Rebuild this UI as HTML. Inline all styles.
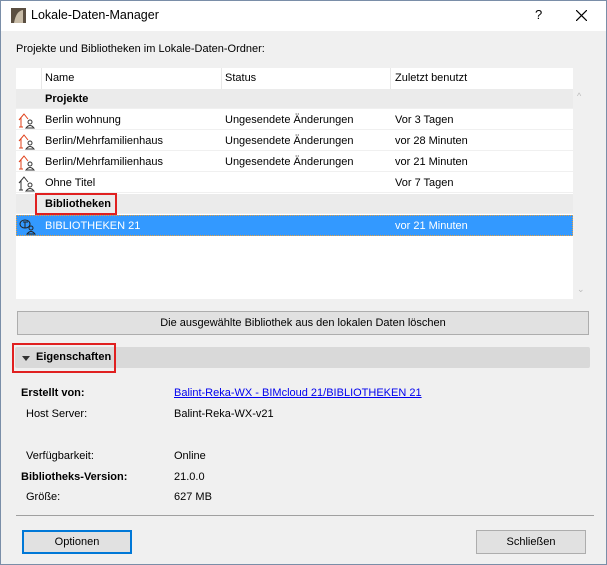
<!DOCTYPE html>
<html><head><meta charset="utf-8"><style>
*{margin:0;padding:0;box-sizing:border-box}
body{width:607px;height:565px;overflow:hidden;font-family:"Liberation Sans",sans-serif;font-size:11px;color:#000;background:#f0f0f0;position:relative}
.win{position:absolute;left:0;top:0;width:607px;height:565px;background:#f0f0f0}
.frame{position:absolute;left:0;top:0;width:607px;height:565px;border:1px solid #7a8ea8;pointer-events:none}
.title{position:absolute;left:0;top:0;width:607px;height:31px;background:#fff}
.abs{position:absolute;white-space:nowrap}
.list{position:absolute;left:16px;top:68px;width:557px;height:231px;background:#fff}
.row{position:absolute;left:0;width:557px;height:20px;line-height:20px;border-bottom:1px solid #f0f0f0}
.grp{background:#ebebeb;font-weight:bold}
.sel{background:#3399ff;color:#fff;border:1px dotted #e8a040}
.c1{position:absolute;left:29px}.c2{position:absolute;left:209px}.c3{position:absolute;left:379px}
.ic{position:absolute;left:2px;top:2px}
.btn{position:absolute;background:#e1e1e1;border:1px solid #adadad;text-align:center}
</style></head><body><div class="win">
<div class="title">
<svg class="abs" style="left:11px;top:8px" width="15" height="15"><rect width="15" height="15" fill="#5a4e40"/><path d="M3 15 Q5 3 12 2 L12 15" fill="#c8bca8"/></svg>
<div class="abs" style="left:31px;top:8px;font-size:12.5px">Lokale-Daten-Manager</div>
<div class="abs" style="left:535px;top:7px;font-size:13px">?</div>
<svg class="abs" style="left:576px;top:10px" width="11" height="11"><path d="M0 0L11 11M11 0L0 11" stroke="#000" stroke-width="1.2"/></svg>
</div>
<div class="abs" style="left:16px;top:43px">Projekte und Bibliotheken im Lokale-Daten-Ordner:</div>
<div class="list">
<div class="row" style="top:0;height:21px;border:none"><span style="position:absolute;left:25px;top:0;width:1px;height:21px;background:#e8e8e8"></span><span class="c1">Name</span><span style="position:absolute;left:205px;width:1px;height:21px;background:#e8e8e8"></span><span class="c2">Status</span><span style="position:absolute;left:374px;width:1px;height:21px;background:#e8e8e8"></span><span class="c3">Zuletzt benutzt</span></div>
<div class="row grp" style="top:21px"><span class="c1">Projekte</span></div>
<div class="row" style="top:42px"><svg class="ic" width="17" height="17"><path d="M1 8L6 2L10 7M3 6V15M1 15H5" stroke="#e0401a" fill="none"/><circle cx="12" cy="10" r="2" fill="none" stroke="#333"/><path d="M8 16Q12 11 16 16Z" fill="none" stroke="#333"/></svg><span class="c1">Berlin wohnung</span><span class="c2">Ungesendete Änderungen</span><span class="c3">Vor 3 Tagen</span></div>
<div class="row" style="top:63px"><svg class="ic" width="17" height="17"><path d="M1 8L6 2L10 7M3 6V15M1 15H5" stroke="#e0401a" fill="none"/><circle cx="12" cy="10" r="2" fill="none" stroke="#333"/><path d="M8 16Q12 11 16 16Z" fill="none" stroke="#333"/></svg><span class="c1">Berlin/Mehrfamilienhaus</span><span class="c2">Ungesendete Änderungen</span><span class="c3">vor 28 Minuten</span></div>
<div class="row" style="top:84px"><svg class="ic" width="17" height="17"><path d="M1 8L6 2L10 7M3 6V15M1 15H5" stroke="#e0401a" fill="none"/><circle cx="12" cy="10" r="2" fill="none" stroke="#333"/><path d="M8 16Q12 11 16 16Z" fill="none" stroke="#333"/></svg><span class="c1">Berlin/Mehrfamilienhaus</span><span class="c2">Ungesendete Änderungen</span><span class="c3">vor 21 Minuten</span></div>
<div class="row" style="top:105px"><svg class="ic" width="17" height="17"><path d="M1 8L6 2L10 7M3 6V15M1 15H5" stroke="#333" fill="none"/><circle cx="12" cy="10" r="2" fill="none" stroke="#333"/><path d="M8 16Q12 11 16 16Z" fill="none" stroke="#333"/></svg><span class="c1">Ohne Titel</span><span class="c3">Vor 7 Tagen</span></div>
<div class="row grp" style="top:126px"><span class="c1">Bibliotheken</span></div>
<div class="row sel" style="top:147px;height:21px"><svg class="ic" width="17" height="17"><ellipse cx="6" cy="6" rx="5" ry="4" fill="none" stroke="#222"/><path d="M4 4H9M6 4V10" stroke="#222"/><circle cx="12" cy="10" r="2" fill="none" stroke="#222"/><path d="M8 16Q12 11 16 16Z" fill="none" stroke="#222"/></svg><span class="c1" style="left:28px">BIBLIOTHEKEN 21</span><span class="c3" style="left:378px">vor 21 Minuten</span></div>
</div>
<div class="abs" style="left:35px;top:193px;width:82px;height:22px;border:2px solid #e02020"></div>
<div class="abs" style="left:577px;top:91px;color:#bbb;font-size:9px">&#94;</div>
<div class="abs" style="left:577px;top:284px;color:#bbb;font-size:9px">&#8964;</div>
<div class="btn" style="left:17px;top:311px;width:572px;height:24px;line-height:22px">Die ausgewählte Bibliothek aus den lokalen Daten löschen</div>
<div class="abs" style="left:15px;top:347px;width:575px;height:21px;background:#d9d9d9;border-radius:2px"></div>
<div class="abs" style="left:12px;top:343px;width:104px;height:30px;border:2px solid #e02020"></div>
<div class="abs" style="left:22px;top:356px;width:0;height:0;border-left:4px solid transparent;border-right:4px solid transparent;border-top:5px solid #333"></div>
<div class="abs" style="left:36px;top:351px;font-weight:bold">Eigenschaften</div>
<div class="abs" style="left:21px;top:387px;font-weight:bold">Erstellt von:</div>
<div class="abs" style="left:174px;top:387px;color:#0000ee;text-decoration:underline">Balint-Reka-WX - BIMcloud 21/BIBLIOTHEKEN 21</div>
<div class="abs" style="left:26px;top:408px">Host Server:</div>
<div class="abs" style="left:174px;top:408px">Balint-Reka-WX-v21</div>
<div class="abs" style="left:26px;top:450px">Verfügbarkeit:</div>
<div class="abs" style="left:174px;top:450px">Online</div>
<div class="abs" style="left:21px;top:471px;font-weight:bold">Bibliotheks-Version:</div>
<div class="abs" style="left:174px;top:471px">21.0.0</div>
<div class="abs" style="left:26px;top:491px">Größe:</div>
<div class="abs" style="left:174px;top:491px">627 MB</div>
<div class="abs" style="left:16px;top:515px;width:578px;height:1px;background:#a0a0a0"></div>
<div class="btn" style="left:22px;top:530px;width:110px;height:24px;line-height:20px;border:2px solid #0078d7">Optionen</div>
<div class="btn" style="left:476px;top:530px;width:110px;height:24px;line-height:22px">Schließen</div>
</div><div class="frame"></div></body></html>
